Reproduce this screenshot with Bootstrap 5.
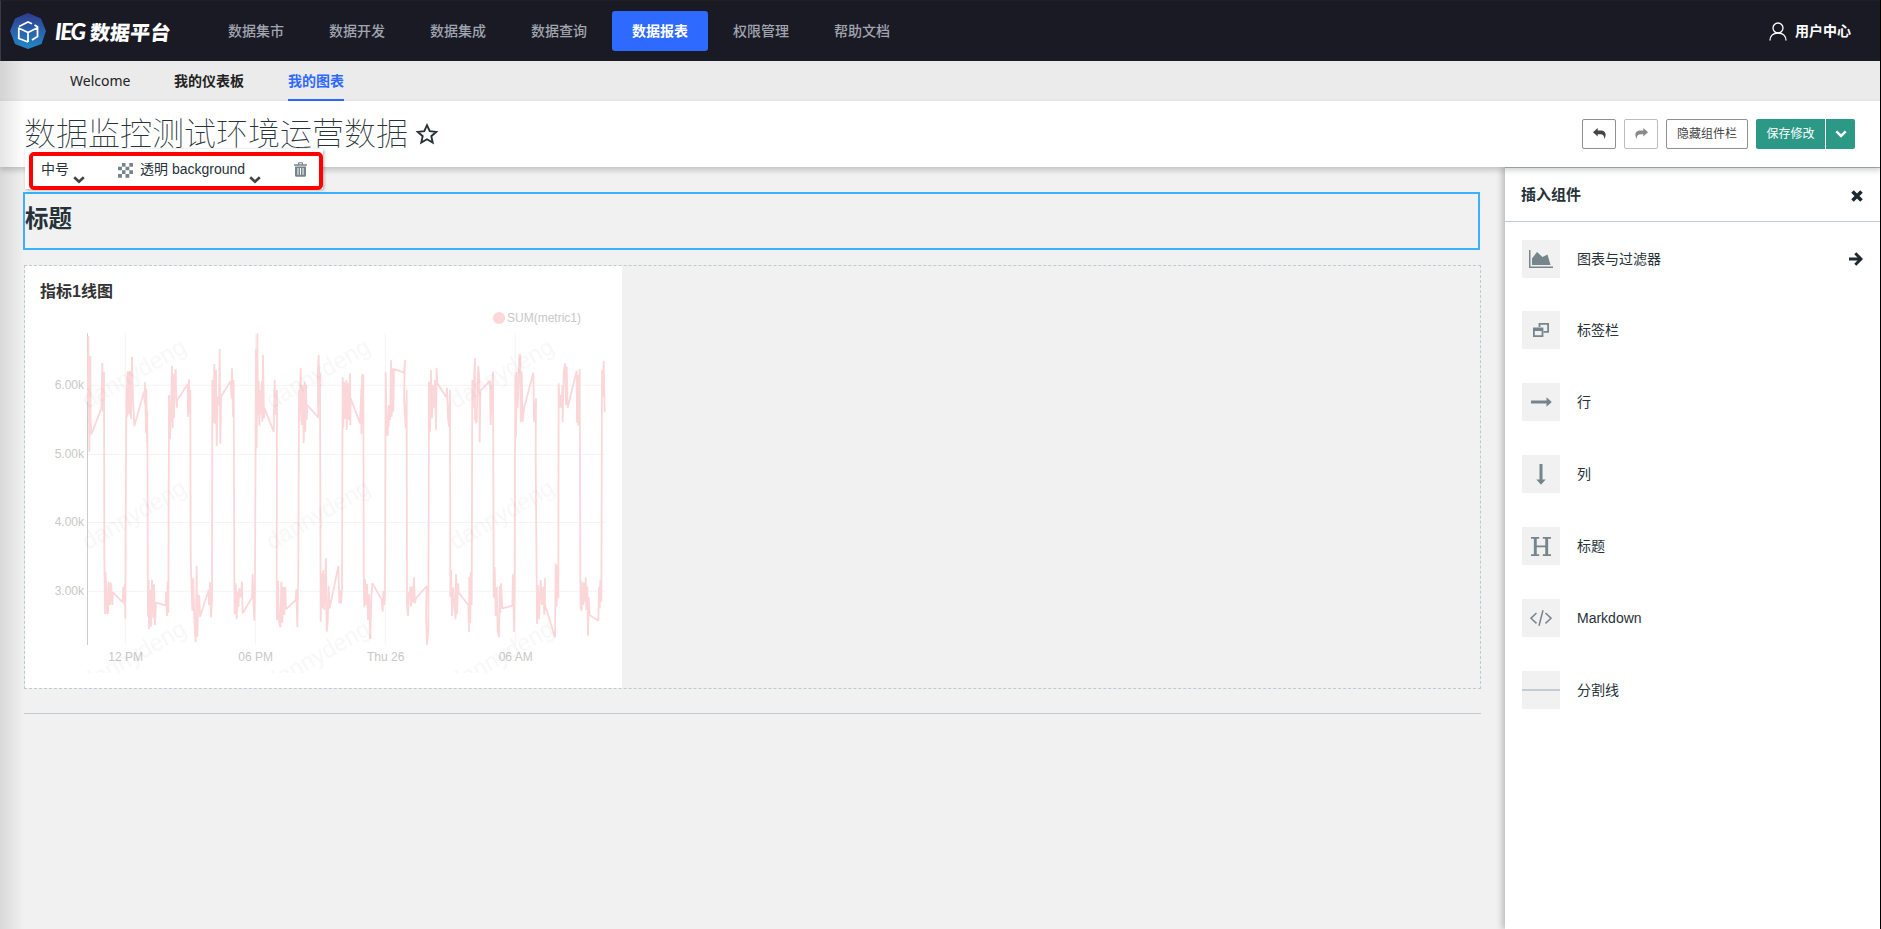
<!DOCTYPE html>
<html lang="zh-CN">
<head>
<meta charset="utf-8">
<title>IEG数据平台</title>
<link href="https://cdn.jsdelivr.net/npm/bootstrap@5.3.0/dist/css/bootstrap.min.css" rel="stylesheet">
<script src="https://cdn.jsdelivr.net/npm/bootstrap@5.3.0/dist/js/bootstrap.bundle.min.js"></script>
<style>
html, body { height: 929px; overflow: hidden; }
body { font-family: "Liberation Sans", "Noto Sans CJK SC", sans-serif; font-size: 14px; line-height: 20px; color: #263238; background: #f1f1f1; }
svg { display: block; flex: none; }
.topbar { height: 61px; background: #1a1a25; border-top: 1px solid #20201f; border-left: 1px solid #3a3b46; border-right: 1px solid #3a3b46; padding: 0 29px 0 9px; }
.brand-name { font: 700 20px/26px "Noto Sans CJK SC", sans-serif; color: #fff; margin-left: 9px; width: 143px; white-space: nowrap; }
.brand-name i { font: italic 900 23px/26px "Lato", sans-serif; display: inline-block; width: 35px; letter-spacing: -1.500px; }
.brand-name b { display: inline-block; transform: skewX(-6deg); letter-spacing: .2px; }
.topbar .nav { gap: 5px; margin-left: 10px; }
.topbar .nav-link { width: 96px; height: 40px; padding: 0; line-height: 41px; text-align: center; color: #a0a5af; font-weight: 500; border-radius: 3px; }
.topbar .nav-link.active { background: #2e6aff; color: #fff; font-weight: 700; }
.user-link { font-weight: 600; gap: 8px; }
.subbar { height: 40px; background: #ebebeb; padding-left: 70px; gap: 44px; color: #222; }
.subbar a { color: #222; text-decoration: none; height: 40px; line-height: 40px; font-weight: 700; border-bottom: 2px solid transparent; }
.subbar a.plain { font-family: "Noto Sans", sans-serif; font-weight: 400; width: 60px; }
.subbar a.on { color: #2e6aff; border-color: #2e6aff; }
.dash-head { height: 66px; background: #fff; box-shadow: 0 3px 6px rgba(0,0,0,.2); padding: 0 26px 0 24px; position: relative; z-index: 2; }
.dash-title { font: 100 32px/46px "Noto Sans CJK SC", sans-serif; margin: 0; padding-top: 7px; }
.tool { height: 30px; border: 1px solid #909090; border-radius: 2px; background: #fff; color: #444; font-size: 12px; line-height: 28px; padding: 0; display: flex; align-items: center; justify-content: center; }
.tool.faded { border-color: #bdbdbd; color: #8a8a8a; }
.tool.save { background: #2c9886; border: 0; color: #fff; border-radius: 2px 0 0 2px; line-height: 30px; }
.tool.caret { border-radius: 0 2px 2px 0; }
.canvas { padding: 25px 24px 0 23px; }
.head-block { height: 58px; margin-right: 1px; border: 2px solid #3ab0ff; font-size: 23.500px; line-height: 51px; font-weight: 700; }
.row-block { height: 424px; margin: 15px 0 0 1px; border: 1px dashed #bfcad0; }
.chart-box { width: 597px; height: 422px; background: #fff; }
.chart-box h2 { font-size: 16px; font-weight: 700; line-height: 20px; margin: 0; padding: 16px 0 4px 15px; height: 40px; color: #333; }
.rule { height: 1px; background: #bfcad5; margin: 24px 0 0 1px; }
.panel { width: 376px; background: #fff; border-top: 1px solid #b2bdc6; box-shadow: -3px 0 6px rgba(0,0,0,.22); z-index: 1; }
.panel-head { height: 54px; border-bottom: 1px solid #bfcad0; padding: 1px 17px 0 16px; font-size: 15px; font-weight: 700; }
.comp { height: 72px; padding: 0 17px; }
.comp.first { padding-top: 1px; }
.comp-icon { width: 38px; height: 38px; background: #f1f1f1; color: #76858c; margin-right: 17px; display: flex; align-items: center; justify-content: center; }
.pop-tools { position: absolute; z-index: 5; left: 25px; top: 149px; width: 298px; height: 40px; background: #fff; box-shadow: 1px 1px 3px rgba(0,0,0,.3); }
.pop-frame { position: absolute; left: 4px; top: 3px; width: 294px; height: 38px; border: 4px solid #f00; border-radius: 5px; padding: 3px 0 0 8px; white-space: nowrap; }
.shade { position: absolute; z-index: 6; left: 0; top: 61px; width: 25px; height: 868px; background: linear-gradient(90deg, rgba(0,0,0,.10), rgba(0,0,0,0)); pointer-events: none; }
.edge { position: absolute; z-index: 7; right: 0; top: 0; width: 1px; height: 929px; background: #000; }
.chart text { font-family: "Liberation Sans", sans-serif; font-size: 36px; fill: #c8c8c8; }
.chart .wm { font-size: 70px; fill: #f7f7f7; }
</style>
</head>
<body class="d-flex flex-column position-relative">
<header class="topbar d-flex align-items-center flex-shrink-0">
  <svg width="36" height="38" viewBox="0 0 36 38"><defs><linearGradient id="lg" x1="0" y1="0" x2="0" y2="1"><stop offset="0" stop-color="#2f3b8f"/><stop offset="1" stop-color="#2487c9"/></linearGradient></defs><path d="M18 1 31 6.500 36 19 31.500 32 18 37 5 32 0 19 5 6.500Z" fill="url(#lg)"/><path d="M8.800 20v6.500l9.200 3.500M18 20.500v9.500M18 20.500l-9.500-4.500M9 14.500l9-4.500 4 1.800M24.500 13l3 1.800v9.700l-5.500 3.500M18 20.500l9-4.500M8.800 15.500v5" fill="none" stroke="#fff" stroke-width="1.800"/></svg>
  <div class="brand-name"><i>IEG</i><b>数据平台</b></div>
  <nav class="nav">
    <a class="nav-link">数据集市</a><a class="nav-link">数据开发</a><a class="nav-link">数据集成</a><a class="nav-link">数据查询</a><a class="nav-link active">数据报表</a><a class="nav-link">权限管理</a><a class="nav-link">帮助文档</a>
  </nav>
  <div class="user-link ms-auto d-flex align-items-center text-white">
    <svg width="18" height="19" viewBox="0 0 18 19" fill="none" stroke="#fff" stroke-width="1.300"><circle cx="9" cy="6" r="5"/><path d="M1 18.500c0-4.500 3.200-7.500 8-7.500s8 3 8 7.500"/></svg>
    <span>用户中心</span>
  </div>
</header>
<nav class="subbar d-flex flex-shrink-0"><a class="plain">Welcome</a><a>我的仪表板</a><a class="on">我的图表</a></nav>
<div class="dash-head d-flex flex-shrink-0">
  <h1 class="dash-title">数据监控测试环境运营数据</h1>
  <svg width="24" height="24" viewBox="0 0 24 24" style="margin:21px 0 0 7px" fill="none" stroke="#263238" stroke-width="1.900"><path d="M12 3.200l2.700 6 6.500.7-4.900 4.300 1.400 6.400-5.700-3.300-5.700 3.300 1.400-6.400-4.900-4.300 6.500-.7z"/></svg>
  <div class="ms-auto d-flex gap-2" style="padding-top:18px">
    <button class="tool" style="width:34px"><svg width="13" height="11" viewBox="0 0 13 11" style="margin-top:-2px"><path d="M0 4.200 4.700 0v2.500h2.600C11 2.500 12.800 4.600 12.600 7.200c-.1 1.300-.7 2.600-1.500 3.700.3-3.200-.9-4.700-3.800-4.700H4.700v2.300z" fill="#444"/></svg></button>
    <button class="tool faded" style="width:34px"><svg width="13" height="11" viewBox="0 0 13 11" style="margin-top:-2px"><path transform="matrix(-1 0 0 1 13 0)" d="M0 4.200 4.700 0v2.500h2.600C11 2.500 12.800 4.600 12.600 7.200c-.1 1.300-.7 2.600-1.500 3.700.3-3.200-.9-4.700-3.800-4.700H4.700v2.300z" fill="#8a8a8a"/></svg></button>
    <button class="tool" style="width:82px">隐藏组件栏</button>
    <div class="d-flex" style="gap:1px"><button class="tool save" style="width:69px">保存修改</button><button class="tool save caret" style="width:29px"><svg width="12" height="8" viewBox="0 0 12 8" fill="none" stroke="#fff" stroke-width="2.500"><path d="M1.300 1.300 6 6l4.700-4.700"/></svg></button></div>
  </div>
</div>
<main class="d-flex flex-grow-1">
  <section class="canvas flex-grow-1">
    <div class="head-block">标题</div>
    <div class="row-block">
      <div class="chart-box">
        <h2>指标1线图</h2>
        <svg class="chart" id="chart" width="597" height="382" viewBox="75 918 1791 1146"></svg>
      </div>
    </div>
    <div class="rule"></div>
  </section>
  <aside class="panel flex-shrink-0">
    <div class="panel-head d-flex align-items-center justify-content-between"><span>插入组件</span><svg width="12" height="12" viewBox="0 0 12 12" stroke="#1d2a30" stroke-width="3.600" style="margin:2px 1px 0 0"><path d="M1.500 1.500l9 9M10.500 1.500l-9 9"/></svg></div>
    <div class="comp first d-flex align-items-center"><span class="comp-icon"><svg width="24" height="18" viewBox="0 0 24 18" fill="currentColor"><path d="M0 0h1.500v16.500H24V18H0zM3 15V8.500L8 2l5.500 5L18.500 4.500 21.500 15z"/></svg></span>图表与过滤器<svg class="ms-auto" width="14" height="14" viewBox="0 0 14 14" fill="none" stroke="#1d2a30" stroke-width="2.900" style="margin-right:1px"><path d="M0 7h11.500M6.300 1.200 12 7l-5.700 5.800"/></svg></div>
    <div class="comp d-flex align-items-center"><span class="comp-icon"><svg width="16" height="14" viewBox="0 0 16 14" fill="none" stroke="currentColor" stroke-width="1.800"><path d="M6.500 4V.9h8.600v8H10.500"/><path d="M.9 5.500h8.600v7.600H.9z"/><path d="M0 6.500h10" stroke-width="3"/></svg></span>标签栏</div>
    <div class="comp d-flex align-items-center"><span class="comp-icon"><svg width="21" height="10" viewBox="0 0 21 10" fill="currentColor"><path d="M0 3.500h15.500V.3L20.800 5l-5.300 4.700V6.500H0z"/></svg></span>行</div>
    <div class="comp d-flex align-items-center"><span class="comp-icon"><svg width="10" height="21" viewBox="0 0 10 21" fill="currentColor"><path d="M3.500 0v15.500H.3L5 20.800l4.700-5.300H6.500V0z"/></svg></span>列</div>
    <div class="comp d-flex align-items-center"><span class="comp-icon"><svg width="20" height="19" viewBox="0 0 20 19" fill="none" stroke="currentColor"><path d="M4.300 1v17M15.700 1v17" stroke-width="2.900"/><path d="M0 .9h8.200M11.800.9H20M0 18.100h8.200M11.800 18.100H20" stroke-width="1.600"/><path d="M4 9.400h12" stroke-width="1.800"/></svg></span>标题</div>
    <div class="comp d-flex align-items-center"><span class="comp-icon"><svg width="22" height="16" viewBox="0 0 22 16" fill="none" stroke="currentColor" stroke-width="1.500"><path d="M6.500 3 1 8.200l5.500 5.200M15.500 3 21 8.200l-5.500 5.200M13 .3 9 15.800"/></svg></span>Markdown</div>
    <div class="comp d-flex align-items-center"><span class="comp-icon"><svg width="38" height="2"><path d="M0 0h38v2H0z" fill="#c1ccd6"/></svg></span>分割线</div>
  </aside>
</main>
<div class="pop-tools"><div class="pop-frame d-flex">
  <span>中号</span>
  <svg width="12" height="8" viewBox="0 0 12 8" fill="none" stroke="#444" stroke-width="2.600" style="margin:17px 0 0 4px"><path d="M1.200 1.300 6 5.800l4.800-4.500"/></svg>
  <svg width="15" height="15" viewBox="0 0 15 15" fill="#76858c" style="margin:4px 0 0 33px"><path d="M4 0h3.500v3.700H4zM11.300 0H15v3.700h-3.700zM0 3.700h4v3.600H0zM7.500 3.700h3.800v3.600H7.500zM4 7.300h3.500V11H4zM11.300 7.300H15V11h-3.700zM0 11h4v3.700H0zM7.500 11h3.800v3.700H7.500z"/></svg>
  <span style="margin-left:7px">透明 background</span>
  <svg width="12" height="8" viewBox="0 0 12 8" fill="none" stroke="#444" stroke-width="2.600" style="margin:17px 0 0 4px"><path d="M1.200 1.300 6 5.800l4.800-4.500"/></svg>
  <svg width="13" height="15" viewBox="0 0 13 15" style="margin:3px 0 0 33px"><path d="M4 2.200V1q0-.8.800-.8h3.400q.8 0 .8.800v1.200h4v1.600H0V2.200zM5.200 1.300v.9h2.600v-.9zM1 4.500h11v8.700q0 1.600-1.500 1.600h-8Q1 14.800 1 13.200z" fill="#76858c" fill-rule="evenodd"/><path d="M4 6v6.800M6.500 6v6.800M9 6v6.800" stroke="#fff" stroke-width="1"/></svg>
</div></div>
<div class="shade"></div><div class="edge"></div>
<script>
// Series samples: [x offset, y offset, "x,y x,y ..."] for alternating high / low periods
const series = [
[60,765,"203,440 205,242 208,590 211,303 212,500 214,538 244,460 247,323 249,470 252,350"],
[60,1470,"253,200 255,372 256,245 259,290 261,370 264,370 266,275 270,345 273,278 277,345 279,307 308,337 310,290 313,345 315,280 316,387"],
[60,765,"318,580 320,410 323,350 322,485 325,350 328,478 330,348 333,492 336,306 339,430 343,513 372,410 374,445 375,382 378,535 379,402 381,560 382,468"],
[60,1470,"383,200 384,380 386,270 387,417 390,300 393,410 396,270 400,385 402,283 405,405 408,338 437,346 438,305 441,378 443,275 445,368"],
[60,765,"447,420 450,553 453,470 456,332 458,520 460,358 462,490 464,372 467,342 469,435 471,458 472,435 503,387 504,485 507,373 509,475 511,405"],
[60,1470,"512,200 514,265 517,362 520,265 523,390 527,457 530,228 532,440 535,315 538,320 540,380 566,300 567,345 570,277 573,382 576,327"],
[60,765,"577,375 580,505 583,327 586,507 588,345 590,573 593,425 597,450 599,282 601,566 603,425 632,378 635,430 636,340 639,485 641,375"],
[60,1470,"643,272 644,372 647,280 650,388 653,305 655,350 658,295 662,322 666,275 668,370 696,322 698,252 701,350 703,392 705,290"],
[60,765,"708,282 710,580 712,235 714,480 716,378 718,512 721,405 723,478 725,380 727,500 729,300 732,490 734,460 761,530 764,375 766,480 771,405"],
[60,1470,"770,272 771,390 774,272 777,395 781,412 784,275 787,398 790,290 793,375 796,290 798,358 827,330 829,298 832,412 835,240"],
[60,765,"837,405 838,500 842,338 845,510 848,390 851,565 854,380 856,530 858,390 860,495 862,450 895,488 893,360 896,300 899,450 900,355"],
[60,1470,"902,395 905,250 907,355 910,240 913,360 918,205 920,425 923,400 926,288 929,355 955,228 958,340 961,300 963,340 966,297"],
[990,765,"38,367 40,518 43,380 46,492 49,376 50,525 53,385 56,495 58,400 60,355 61,510 62,430 90,505 94,400 94,538 96,358 98,505 100,358"],
[990,1470,"101,240 103,352 105,268 108,345 111,282 114,390 117,313 121,447 124,320 127,280 155,328 158,365 160,303 163,345 165,305"],
[990,765,"167,352 170,530 173,542 176,450 176,515 178,450 180,495 183,316 185,485 188,340 190,470 192,342 222,353 225,315 222,430 227,520 230,405"],
[990,1470,"231,345 234,378 237,305 239,320 241,290 243,350 246,290 249,338 252,262 255,340 258,325 290,288 288,376 291,465 295,418"],
[990,765,"297,380 300,530 303,345 306,490 309,390 312,458 315,375 318,525 320,338 322,385 349,427 351,398 354,485 357,515 360,405"],
[990,1470,"361,320 363,240 366,378 370,293 373,345 377,388 378,252 381,372 384,280 386,308 415,345 417,426 418,260 421,398 422,247 425,345"],
[990,765,"427,375 430,458 432,370 435,310 435,490 440,505 443,370 445,333 448,370 449,562 451,408 480,377 482,510 485,415 489,350"],
[990,1470,"491,323 494,232 497,378 500,290 503,420 507,442 509,288 511,370 513,280 517,355 547,347 549,253 552,425 554,260"],
[990,765,"556,360 558,548 560,350 563,460 566,380 568,300 571,300 572,502 575,350 578,500 582,460 610,353 612,500 618,430 617,605"],
[990,1470,"621,402 624,285 627,388 632,270 636,345 640,290 643,375 645,265 645,345 675,442 677,220 680,350 682,225 685,325"],
[990,765,"686,385 689,458 692,420 695,458 697,390 698,502 701,352 705,325 708,450 710,335 713,458 740,347 741,503 743,360 745,512 749,342"],
[990,1470,"751,265 752,355 755,362 757,275 760,345 763,278 765,335 767,262 769,360 772,290 774,437 776,322 779,375 805,392 807,290 809,355 811,270 814,335"],
[990,765,"816,345 818,425 821,318 824,472"]
];
const pts = series.map(([dx, dy, s]) => s.split(" ").map(p => { const [x, y] = p.split(",").map(Number); return (x + dx) + "," + (y + dy); }).join(" ")).join(" ");
let g = "";
[1156, 1363.500, 1567.500, 1774].forEach((y, i) => {
  g += `<path d="M262 ${y}H1815" stroke="#f4f4f4" stroke-width="3"/><text x="252" y="${y + 11}" text-anchor="end">${6 - i}.00k</text>`;
});
[[376, "12 PM"], [766, "06 PM"], [1156, "Thu 26"], [1546, "06 AM"]].forEach(([x, t]) => {
  g += `<path d="M${x} 1000V1934" stroke="#f4f4f4" stroke-width="3"/><text x="${x + 1}" y="1983" text-anchor="middle">${t}</text>`;
});
g += `<path d="M262.500 1000V1935" stroke="#ccc" stroke-width="3"/>`;
g += `<polyline points="${pts}" fill="none" stroke="#fbd7da" stroke-width="5.400" stroke-linejoin="bevel"/>`;
g += `<circle cx="1497" cy="954" r="18" fill="#fbd7da"/><text x="1521" y="966">SUM(metric1)</text>`;
g += `<clipPath id="wmclip"><path d="M75 918H1866V2018H75z"/></clipPath><g clip-path="url(#wmclip)" style="mix-blend-mode:multiply">`;
for (let r = 0; r < 3; r++) for (let c = 0; c < 3; c++)
  g += `<text class="wm" transform="translate(${264 + c * 551.500} ${1228 + r * 423}) rotate(-30)">dannydeng</text>`;
document.getElementById("chart").innerHTML = g + "</g>";
</script>
</body>
</html>
